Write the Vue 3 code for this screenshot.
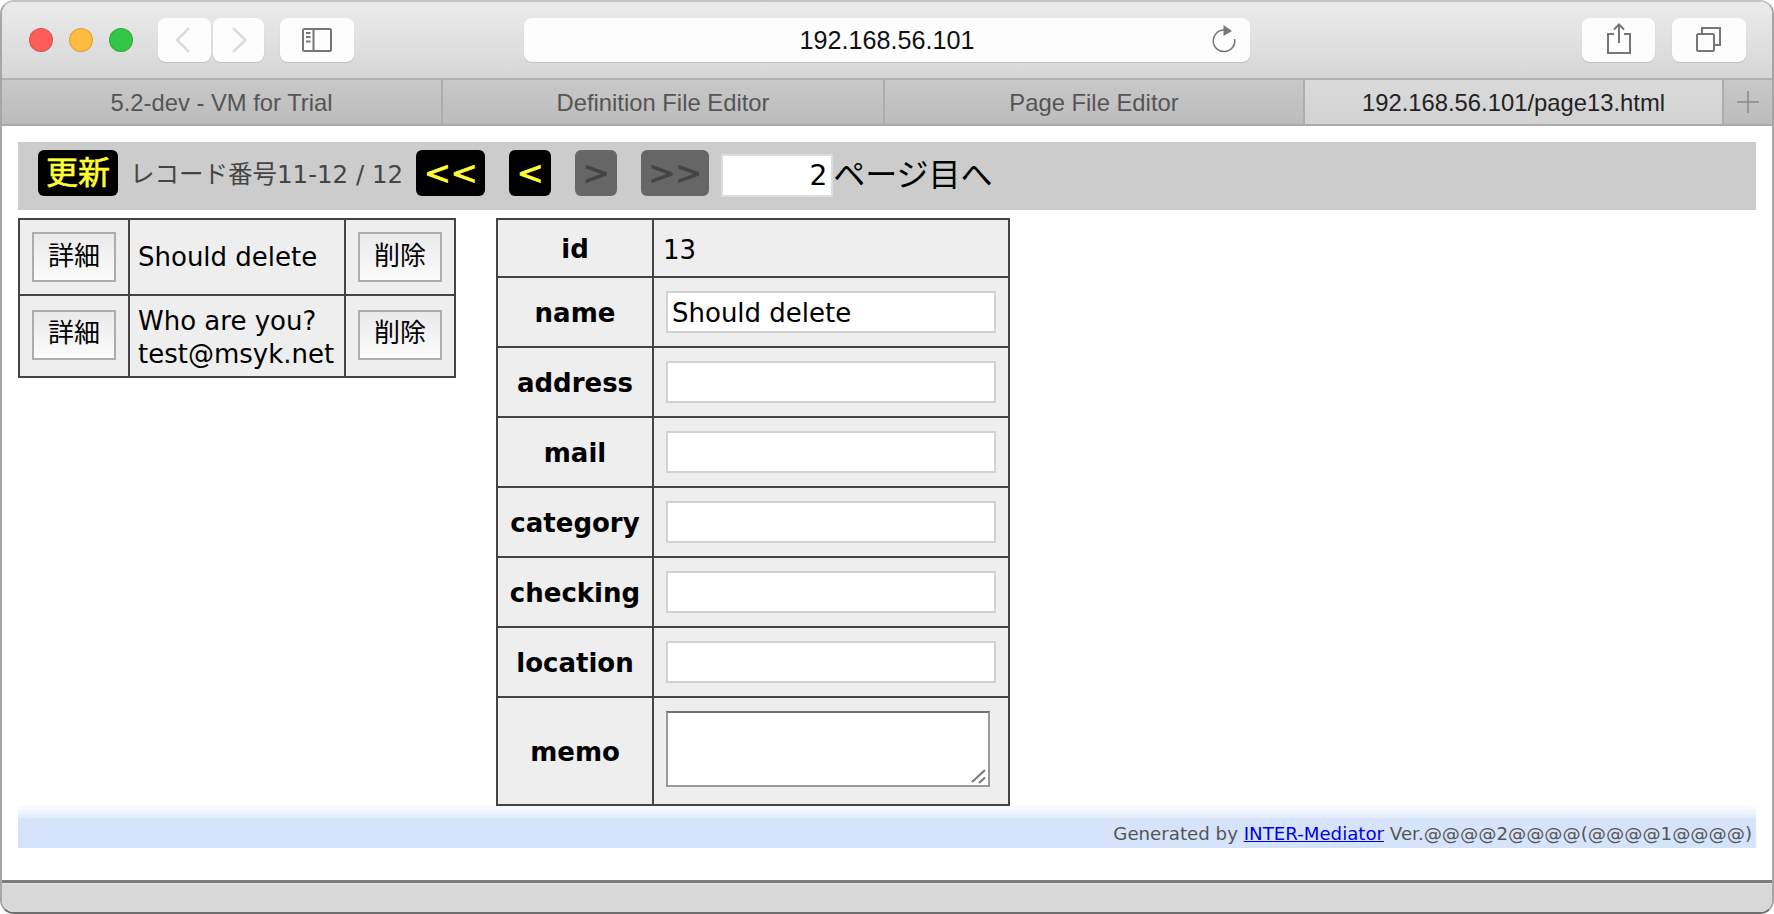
<script setup>
const tabs = [
  { title: '5.2-dev - VM for Trial', width: 441 },
  { title: 'Definition File Editor', width: 442 },
  { title: 'Page File Editor', width: 420 },
  { title: '192.168.56.101/page13.html', width: 419, active: true }
]

const listRows = [
  { id: 1, lines: ['Should delete'] },
  { id: 2, lines: ['Who are you?', 'test@msyk.net'] }
]

const fields = [
  { label: 'name', value: 'Should delete' },
  { label: 'address', value: '' },
  { label: 'mail', value: '' },
  { label: 'category', value: '' },
  { label: 'checking', value: '' },
  { label: 'location', value: '' }
]
</script>

<template>
  <div class="window">
    <header class="toolbar">
      <span class="light red"></span>
      <span class="light yellow"></span>
      <span class="light green"></span>

      <div class="tool back">
        <svg width="53" height="44" viewBox="0 0 53 44"><path d="M31 10 19 22l12 12" class="chev" /></svg>
      </div>
      <div class="tool forward">
        <svg width="51" height="44" viewBox="0 0 51 44"><path d="M20 10l12.500 12L20 34" class="chev" /></svg>
      </div>
      <div class="tool sidebar">
        <svg width="74" height="44" viewBox="0 0 74 44">
          <rect x="23" y="11" width="28" height="22" rx="1.500" class="ico" />
          <path d="M33.500 11v22" class="ico" />
          <path d="M26 15h4.500M26 19h4.500M26 23.500h4.500" class="ico" />
        </svg>
      </div>

      <div class="url">
        <span>192.168.56.101</span>
        <svg class="reload" width="26" height="30" viewBox="0 0 26 30">
          <path d="M12 5A10.800 10.800 0 1 0 22.700 14" class="ico thin" />
          <path d="M11.500 0 20 6l-8.500 5z" fill="#777" />
        </svg>
      </div>

      <div class="tool share">
        <svg width="73" height="44" viewBox="0 0 73 44">
          <path d="M32 16h-6v19h22V16h-6" class="ico" />
          <path d="M37 25V6.500M32 11.500l5-5 5 5" class="ico" />
        </svg>
      </div>
      <div class="tool pages">
        <svg width="74" height="44" viewBox="0 0 74 44">
          <rect x="25" y="16" width="17" height="17" rx="1.500" class="ico" />
          <path d="M30 15v-5h18v17h-5" class="ico" />
        </svg>
      </div>
    </header>

    <nav class="tabs">
      <div
        v-for="tab in tabs"
        :key="tab.title"
        class="tab"
        :class="{ active: tab.active }"
        :style="{ width: tab.width + 'px' }"
      >
        {{ tab.title }}
      </div>
      <div class="tab-add">
        <svg width="22" height="22" viewBox="0 0 22 22"><path d="M11 0v22M0 11h22" stroke="#8a8a8a" stroke-width="1.500" /></svg>
      </div>
    </nav>

    <main class="content">
      <div class="pager">
        <button class="nav reload-btn">更新</button>
        <span class="record">レコード番号11-12 / 12</span>
        <button class="nav first">&lt;&lt;</button>
        <button class="nav prev">&lt;</button>
        <button class="nav next off">&gt;</button>
        <button class="nav last off">&gt;&gt;</button>
        <input class="page-no" value="2" readonly />
        <span class="page-label">ページ目へ</span>
      </div>

      <div class="panels">
        <table class="list">
          <tbody>
            <tr v-for="row in listRows" :key="row.id" :class="'row-' + row.id">
              <td class="c-btn"><button class="cmd">詳細</button></td>
              <td class="c-text">
                <div v-for="line in row.lines" :key="line">{{ line }}</div>
              </td>
              <td class="c-btn"><button class="cmd">削除</button></td>
            </tr>
          </tbody>
        </table>

        <table class="detail">
          <tbody>
            <tr class="row-id">
              <th>id</th>
              <td class="id-value">13</td>
            </tr>
            <tr v-for="field in fields" :key="field.label" class="row-field">
              <th>{{ field.label }}</th>
              <td><input class="field" :value="field.value" readonly /></td>
            </tr>
            <tr class="row-memo">
              <th>memo</th>
              <td>
                <div class="memo-wrap">
                  <textarea class="memo"></textarea>
                  <svg class="grip" width="16" height="16" viewBox="0 0 16 16">
                    <path d="M1 14 14 2M8 15l6-5.500" stroke="#777" stroke-width="2" fill="none" />
                  </svg>
                </div>
              </td>
            </tr>
          </tbody>
        </table>
      </div>

      <footer class="generated">
        <span>Generated by <a href="#">INTER-Mediator</a> Ver.@@@@2@@@@(@@@@1@@@@)</span>
      </footer>
    </main>

    <div class="status"></div>
  </div>
</template>

<style>
html,
body {
  margin: 0;
  background: #fff;
}
</style>

<style scoped>
.window {
  box-sizing: border-box;
  width: 1774px;
  height: 914px;
  display: flex;
  flex-direction: column;
  overflow: hidden;
  border: 2px solid #a6a6a6;
  border-top-color: #c4c4c4;
  border-bottom-color: #6e6e6e;
  border-radius: 14px;
  background: #fff;
}

.toolbar {
  box-sizing: border-box;
  height: 76px;
  flex: none;
  display: flex;
  align-items: center;
  padding: 0 0 0 27px;
  background: linear-gradient(#ebebeb, #d6d6d6);
}

.light {
  box-sizing: border-box;
  width: 24px;
  height: 24px;
  border-radius: 50%;
  margin-right: 16px;
  border: 1px solid rgba(0, 0, 0, 0.14);
}
.red { background: #fc5f5a; }
.yellow { background: #fdbc40; }
.green { background: #33c748; }

.tool {
  height: 44px;
  border-radius: 8px;
  background: #fdfdfd;
  box-shadow: 0 1px 1px rgba(0, 0, 0, 0.12);
}
.tool svg { display: block; }
.back { width: 53px; margin-left: 9px; }
.forward { width: 51px; margin-left: 2px; }
.sidebar { width: 74px; margin-left: 16px; }
.share { width: 73px; }
.pages { width: 74px; margin-left: 17px; }

.chev {
  fill: none;
  stroke: #dcdcdc;
  stroke-width: 2.500;
}
.ico {
  fill: none;
  stroke: #767676;
  stroke-width: 2;
}
.thin { stroke-width: 1.500; }

.url {
  position: relative;
  width: 726px;
  height: 44px;
  margin: 0 332px 0 170px;
  border-radius: 8px;
  background: #fdfdfd;
  box-shadow: 0 1px 1px rgba(0, 0, 0, 0.12);
  display: flex;
  align-items: center;
  justify-content: center;
  font: 25.200px "Liberation Sans", Arial, sans-serif;
  color: #111;
}
.reload {
  position: absolute;
  right: 12px;
  top: 7px;
}

.tabs {
  box-sizing: border-box;
  height: 48px;
  flex: none;
  display: flex;
  border-top: 2px solid #b0b0b0;
  border-bottom: 2px solid #aaa;
  background: linear-gradient(#c8c8c8, #bcbcbc);
  font: 23.800px "Liberation Sans", Arial, sans-serif;
  color: #555;
}
.tab {
  box-sizing: border-box;
  display: flex;
  align-items: center;
  justify-content: center;
  padding-top: 1px;
  border-right: 2px solid #adadad;
}
.tab.active {
  background: linear-gradient(#dadada, #d2d2d2);
  color: #222;
}
.tab-add {
  flex: 1;
  display: flex;
  align-items: center;
  justify-content: center;
}
.tab-add svg { display: block; }

.content {
  flex: 1;
  min-height: 0;
  padding: 16px 16px 0;
  font-family: "DejaVu Sans", Verdana, "Noto Sans CJK JP", sans-serif;
}

.pager {
  box-sizing: border-box;
  height: 68px;
  display: flex;
  align-items: flex-start;
  padding: 8px 0 0 20px;
  background: #ccc;
}

.nav {
  box-sizing: border-box;
  height: 46px;
  padding: 0;
  border: 0;
  border-radius: 6px;
  background: #000;
  color: #ff3;
  font: 400 32px "DejaVu Sans", Verdana, sans-serif;
  line-height: 46px;
  -webkit-text-stroke: 0.8px currentColor;
}
.reload-btn {
  width: 80px;
  padding-bottom: 5px;
  font: 400 32px "Noto Sans CJK JP", sans-serif;
  line-height: 41px;
  -webkit-text-stroke: 0.6px currentColor;
}
.first { width: 69px; }
.prev { width: 42px; margin-left: 24px; }
.next { width: 42px; margin-left: 24px; }
.last { width: 68px; margin-left: 24px; }
.off {
  background: #666;
  color: #444;
}

.record {
  margin: 2px 13px 0 12px;
  font-size: 24.500px;
  line-height: 46px;
  color: #444;
}

.page-no {
  box-sizing: border-box;
  width: 112px;
  height: 43px;
  margin: 4px 0 0 12px;
  padding: 0 4px 0 0;
  border: 2px solid #ddd;
  outline: none;
  background: #fff;
  color: #000;
  text-align: right;
  font: 28px "DejaVu Sans", Verdana, sans-serif;
}
.page-label {
  font: 32px "Noto Sans CJK JP", sans-serif;
  line-height: 44px;
  color: #000;
}

.panels {
  display: flex;
  align-items: flex-start;
  gap: 40px;
  margin-top: 8px;
}

table {
  border-collapse: collapse;
  background: #eee;
  color: #000;
}
td,
th {
  border: 2px solid #444;
  padding: 0;
}

.list {
  width: 438px;
  table-layout: fixed;
  font-size: 26px;
  line-height: 33px;
}
.list .row-1 td { height: 74px; }
.list .row-2 td { height: 80px; }
.c-btn {
  width: 108px;
  text-align: center;
}
.c-text { padding-left: 8px; }
.row-2 .c-text div:first-child { margin-top: 3px; }
.cmd {
  box-sizing: border-box;
  width: 84px;
  height: 50px;
  padding: 0 0 8px;
  border: 2px solid #adadad;
  background: linear-gradient(#eaeaea, #fbfbfb);
  color: #000;
  font: 26px "Noto Sans CJK JP", sans-serif;
  vertical-align: middle;
}
.row-2 .cmd {
  margin-bottom: 2px;
  padding-bottom: 11px;
}

.detail {
  width: 514px;
  table-layout: fixed;
  font-size: 26px;
  line-height: 30px;
}
.detail th {
  box-sizing: border-box;
  width: 156px;
  padding-top: 2px;
  font-weight: 700;
  text-align: center;
}
.detail td { padding-left: 12px; }
.row-id th,
.row-id td { height: 58px; }
.row-field th,
.row-field td { height: 68px; }
.row-memo th,
.row-memo td { height: 106px; }
.detail .id-value {
  box-sizing: border-box;
  padding-left: 9px;
  padding-top: 3px;
  line-height: 32px;
}
.field {
  display: block;
  box-sizing: border-box;
  width: 330px;
  height: 42px;
  padding: 2px 4px 0;
  border: 2px solid #d2d2d2;
  outline: none;
  background: #fff;
  color: #000;
  font: 26px "DejaVu Sans", Verdana, sans-serif;
}
.memo-wrap {
  position: relative;
  width: 324px;
  margin-bottom: 5px;
}
.memo {
  display: block;
  box-sizing: border-box;
  width: 324px;
  height: 76px;
  padding: 0;
  border: 2px solid;
  border-color: #6e6e6e #999 #999;
  outline: none;
  background: #fff;
  resize: none;
}
.grip {
  position: absolute;
  right: 3px;
  bottom: 3px;
}

.generated {
  box-sizing: border-box;
  height: 42px;
  padding: 16px 4px 0 0;
  text-align: right;
  font-size: 18.200px;
  line-height: 24px;
  color: #555;
  background: linear-gradient(#f8faff 0, #f8faff 4px, #eff4fe 4px, #eff4fe 8px, #e5edfd 8px, #e5edfd 12px, #d6e4fb 12px);
}
.generated a { color: #00e; }

.status {
  box-sizing: border-box;
  height: 32px;
  flex: none;
  border-top: 3px solid #7d7d7d;
  background: linear-gradient(#e0e0e0 0, #e0e0e0 1px, #d8d8d8 1px);
}
</style>
